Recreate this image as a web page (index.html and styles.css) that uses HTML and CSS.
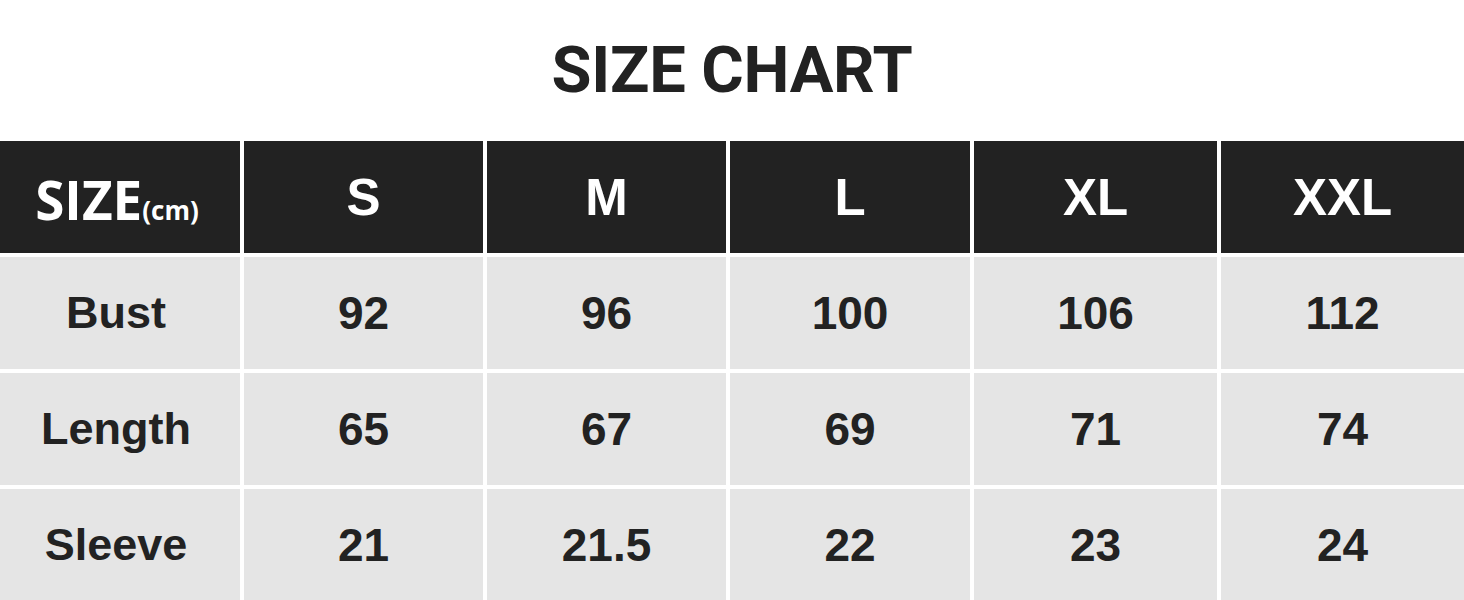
FILE: index.html
```html
<!DOCTYPE html>
<html>
<head>
<meta charset="utf-8">
<link rel="stylesheet" href="styles.css">
</head>
<body>
<h1 class="title">SIZE CHART</h1>
<div class="chart">
  <div class="cell head first"><span class="size">SIZE</span><span class="unit">(cm)</span></div>
  <div class="cell head">S</div>
  <div class="cell head">M</div>
  <div class="cell head">L</div>
  <div class="cell head">XL</div>
  <div class="cell head">XXL</div>

  <div class="cell label">Bust</div>
  <div class="cell">92</div>
  <div class="cell">96</div>
  <div class="cell">100</div>
  <div class="cell">106</div>
  <div class="cell">112</div>

  <div class="cell label">Length</div>
  <div class="cell">65</div>
  <div class="cell">67</div>
  <div class="cell">69</div>
  <div class="cell">71</div>
  <div class="cell">74</div>

  <div class="cell label">Sleeve</div>
  <div class="cell">21</div>
  <div class="cell">21.5</div>
  <div class="cell">22</div>
  <div class="cell">23</div>
  <div class="cell">24</div>
</div>
</body>
</html>
```

FILE: styles.css
```css
html, body {
  margin: 0;
  padding: 0;
  background: #ffffff;
  overflow: hidden;
}

.title {
  margin: 0;
  height: 141px;
  display: flex;
  align-items: center;
  justify-content: center;
  padding-bottom: 2px;
  box-sizing: border-box;
  font-family: Roboto, "Liberation Sans", sans-serif;
  font-weight: 700;
  font-size: 65px;
  letter-spacing: -0.3px;
  color: #222222;
}

.chart {
  display: grid;
  grid-template-columns: 240px 239px 239px 240px 243px 243px;
  grid-auto-rows: 112px;
  column-gap: 4px;
  row-gap: 4px;
}

.cell {
  background: #e5e5e5;
  color: #222222;
  display: flex;
  align-items: center;
  justify-content: center;
  font-family: "Liberation Sans", Arial, sans-serif;
  font-weight: 700;
  font-size: 46px;
}

.cell.label {
  padding-right: 8px;
  font-size: 45px;
}

.cell.head {
  background: #222222;
  color: #ffffff;
  font-size: 51px;
}

.cell.first {
  align-items: baseline;
  padding-top: 32px;
  padding-right: 6px;
  box-sizing: border-box;
  font-family: "Open Sans", "Liberation Sans", sans-serif;
}

.size {
  font-size: 53px;
  line-height: 1;
}

.unit {
  font-size: 26px;
  line-height: 1;
}
```
